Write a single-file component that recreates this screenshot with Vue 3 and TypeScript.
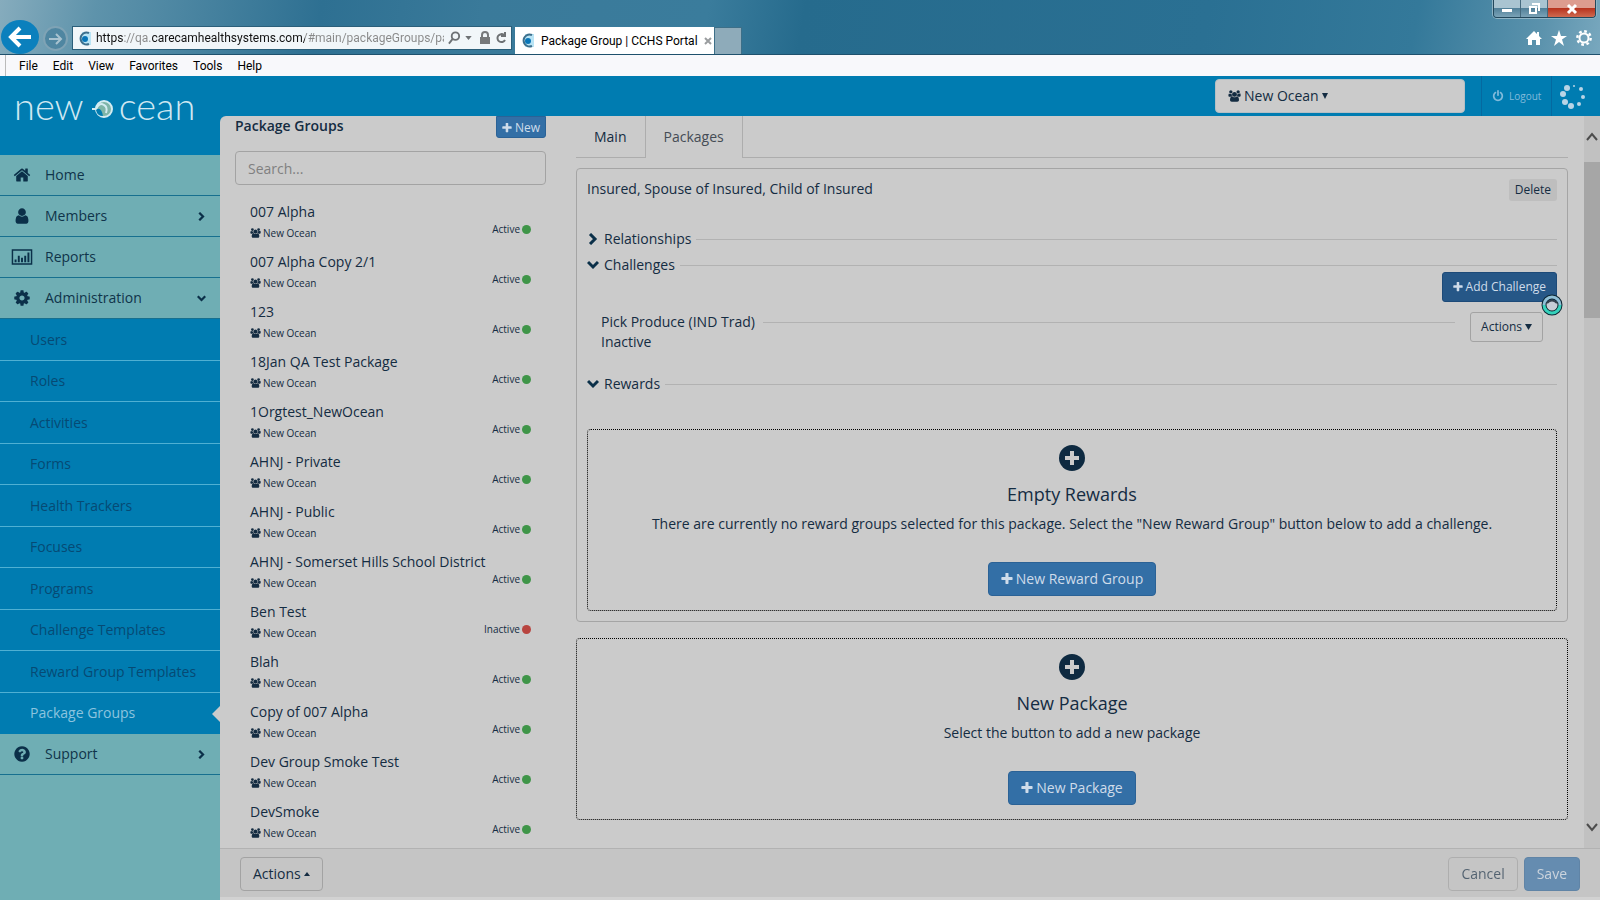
<script setup lang="ts">
import { ref } from 'vue'

interface GroupRow {
  name: string
  active: boolean
}

interface MenuEntry {
  label: string
  icon: string
  arrow?: string
}

const home =
  'M1472 992v480q0 26-19 45t-45 19h-384v-384h-256v384h-384q-26 0-45-19t-19-45v-480q0-1 .5-3t.5-3l575-474 575 474q1 2 1 6zm223-69l-62 74q-8 9-21 11h-3q-13 0-21-7l-692-577-692 577q-12 8-24 7-13-2-21-11l-62-74q-8-10-7-23.5t11-21.5l719-599q32-26 76-26t76 26l244 204v-195q0-14 9-23t23-9h192q14 0 23 9t9 23v408l219 182q10 8 11 21.5t-7 23.5z'
const user =
  'M1536 1399q0 109-62.5 187t-150.5 78h-854q-88 0-150.5-78t-62.5-187q0-85 8.5-160.5t31.5-152 58.5-131 94-89 134.5-34.5q131 128 313 128t313-128q76 0 134.5 34.5t94 89 58.5 131 31.5 152 8.5 160.5zm-256-887q0 159-112.5 271.5t-271.5 112.5-271.5-112.5-112.5-271.5 112.5-271.5 271.5-112.5 271.5 112.5 112.5 271.5z'
const chart =
  'M-128 128H1920V1664H-128ZM16 272V1520H1776V272ZM160 1152H352V1408H160ZM480 768H672V1408H480ZM800 960H992V1408H800ZM1120 768H1312V1408H1120ZM1440 448H1632V1408H1440Z'
const cog =
  'M1152 896q0-106-75-181t-181-75-181 75-75 181 75 181 181 75 181-75 75-181zm512-109v222q0 12-8 23t-20 13l-185 28q-19 54-39 91 35 50 107 138 10 12 10 25t-9 23q-27 37-99 108t-94 71q-12 0-26-9l-138-108q-44 23-91 38-16 136-29 186-7 28-36 28h-222q-14 0-24.5-8.5t-11.5-21.5l-28-184q-49-16-90-37l-141 107q-10 9-25 9-14 0-25-11-126-114-165-168-7-10-7-23 0-12 8-23 15-21 51-66.5t54-70.5q-27-50-41-99l-183-27q-13-2-21-12.5t-8-23.5v-222q0-12 8-23t19-13l186-28q14-46 39-92-40-57-107-138-10-12-10-24 0-10 9-23 26-36 98.5-107.5t94.5-71.5q13 0 26 10l138 107q44-23 91-38 16-136 29-186 7-28 36-28h222q14 0 24.5 8.5t11.5 21.5l28 184q49 16 90 37l142-107q9-9 24-9 13 0 25 10 129 119 165 170 7 8 7 22 0 12-8 23-15 21-51 66.5t-54 70.5q26 50 41 98l183 28q13 2 21 12.5t8 23.5z'
const question =
  'M1024 1376v-192q0-14-9-23t-23-9h-192q-14 0-23 9t-9 23v192q0 14 9 23t23 9h192q14 0 23-9t9-23zm256-672q0-88-55.5-163t-138.5-116-170-41q-243 0-371 213-15 24 8 42l132 100q7 6 19 6 16 0 25-12 53-68 86-92 34-24 86-24 48 0 85.5 26t37.5 59q0 38-20 61t-68 45q-63 28-115.5 86.5t-52.5 125.5v36q0 14 9 23t23 9h192q14 0 23-9t9-23q0-19 21.5-49.5t54.5-49.5q32-18 49-28.5t46-35 44.5-48 28-60.5 12.5-81zm384 192q0 209-103 385.5t-279.5 279.5-385.5 103-385.5-103-279.5-279.5-103-385.5 103-385.5 279.5-279.5 385.5-103 385.5 103 279.5 279.5 103 385.5z'
const users =
  'M657 896q-162 5-265 128h-134q-82 0-138-40.5t-56-118.5q0-353 124-353 6 0 43.5 21t97.5 42.5 119 21.5q67 0 133-23-5 37-5 66 0 159 97 287zm1071 637q0 120-73 189.5t-194 69.5h-874q-121 0-194-69.5t-73-189.5q0-53 3.5-103.5t14-109 26.5-108.5 43-97.5 62-81 85.5-53.5 111.5-20q10 0 43 21.5t73 48 107 48 135 21.5 135-21.5 107-48 73-48 43-21.5q61 0 111.5 20t85.5 53.5 62 81 43 97.5 26.5 108.5 14 109 3.5 103.5zm-1024-1277q0 106-75 181t-181 75-181-75-75-181 75-181 181-75 181 75 75 181zm704 384q0 159-112.5 271.5t-271.5 112.5-271.5-112.5-112.5-271.5 112.5-271.5 271.5-112.5 271.5 112.5 112.5 271.5zm576 225q0 78-56 118.5t-138 40.5h-134q-103-123-265-128 97-128 97-287 0-29-5-66 66 23 133 23 59 0 119-21.5t97.5-42.5 43.5-21q124 0 124 353zm-128-609q0 106-75 181t-181 75-181-75-75-181 75-181 181-75 181 75 75 181z'
const power =
  'M1664 896q0 156-61 298t-164 245-245 164-298 61-298-61-245-164-164-245-61-298q0-182 80.5-343t226.5-270q43-32 95.5-25t83.5 50q32 42 24.5 94.5t-49.5 84.5q-98 74-151.5 181t-53.5 228q0 104 40.5 198.5t109.5 163.5 163.5 109.5 198.5 40.5 198.5-40.5 163.5-109.5 109.5-163.5 40.5-198.5q0-121-53.5-228t-151.5-181q-42-32-49.5-84.5t24.5-94.5q31-43 84-50t95 25q146 109 226.5 270t80.5 343zm-640-768v640q0 52-38 90t-90 38-90-38-38-90v-640q0-52 38-90t90-38 90 38 38 90z'
const plus =
  'M1600 736v192q0 40-28 68t-68 28h-416v416q0 40-28 68t-68 28h-192q-40 0-68-28t-28-68v-416h-416q-40 0-68-28t-28-68v-192q0-40 28-68t68-28h416v-416q0-40 28-68t68-28h192q40 0 68 28t28 68v416h416q40 0 68 28t28 68z'

const right = 'M3 1 8 6 3 11'
const down = 'M1 3 6 8 11 3'

const browserMenu = ['File', 'Edit', 'View', 'Favorites', 'Tools', 'Help']
const address = ref('https://qa.carecamhealthsystems.com/#main/packageGroups/packages')
const search = ref('')

const topMenu: MenuEntry[] = [
  { label: 'Home', icon: home },
  { label: 'Members', icon: user, arrow: right },
  { label: 'Reports', icon: chart },
  { label: 'Administration', icon: cog, arrow: down },
]
const adminMenu = [
  'Users',
  'Roles',
  'Activities',
  'Forms',
  'Health Trackers',
  'Focuses',
  'Programs',
  'Challenge Templates',
  'Reward Group Templates',
  'Package Groups',
]

const groups: GroupRow[] = [
  { name: '007 Alpha', active: true },
  { name: '007 Alpha Copy 2/1', active: true },
  { name: '123', active: true },
  { name: '18Jan QA Test Package', active: true },
  { name: '1Orgtest_NewOcean', active: true },
  { name: 'AHNJ - Private', active: true },
  { name: 'AHNJ - Public', active: true },
  { name: 'AHNJ - Somerset Hills School District', active: true },
  { name: 'Ben Test', active: false },
  { name: 'Blah', active: true },
  { name: 'Copy of 007 Alpha', active: true },
  { name: 'Dev Group Smoke Test', active: true },
  { name: 'DevSmoke', active: true },
]

const spinner = [
  { x: 15, y: 4, r: 1 },
  { x: 22, y: 7, r: 2 },
  { x: 24, y: 15, r: 2 },
  { x: 20, y: 22, r: 2 },
  { x: 12, y: 24, r: 3 },
  { x: 6, y: 20, r: 3 },
  { x: 4, y: 12, r: 3 },
  { x: 8, y: 6, r: 3 },
]
</script>

<template>
  <div class="window">
    <header class="chrome">
      <div class="caption">
        <button class="cap" aria-label="Minimize">
          <svg width="12" height="12" viewBox="0 0 12 12"><rect x="1" y="6" width="10" height="3" fill="#fff" /></svg>
        </button>
        <button class="cap" aria-label="Restore">
          <svg width="12" height="12" viewBox="0 0 12 12" fill="none" stroke="#fff" stroke-width="2">
            <path d="M2 4h6v6H2zM4 1h7v7" />
          </svg>
        </button>
        <button class="cap close" aria-label="Close">
          <svg width="12" height="12" viewBox="0 0 12 12" stroke="#fff" stroke-width="3"><path d="M2 2 10 10M10 2 2 10" /></svg>
        </button>
      </div>
      <div class="nav">
        <button class="back" aria-label="Back">
          <svg width="24" height="24" viewBox="0 0 24 24" fill="none" stroke="#fff" stroke-width="4">
            <path d="M23 12H4M12 3 3 12 12 21" />
          </svg>
        </button>
        <button class="forward" aria-label="Forward">
          <svg width="16" height="16" viewBox="0 0 16 16" fill="none" stroke="#a9c3d0" stroke-width="2">
            <path d="M1 8H13M8 3 13 8 8 13" />
          </svg>
        </button>
        <div class="address">
          <svg width="15" height="15" viewBox="0 0 15 15">
            <rect x="5" y="1" width="9" height="13" fill="#b9e4f5" />
            <path d="M12 2A6 6 0 1 0 12 13" fill="none" stroke="#3d6f8c" stroke-width="2" />
            <circle cx="8" cy="8" r="3" fill="#0a76b8" />
          </svg>
          <input v-model="address" class="url" aria-label="Address" />
          <button class="tool" aria-label="Search">
            <svg width="13" height="14" viewBox="0 0 14 14" fill="none" stroke="#6d7174" stroke-width="2">
              <circle cx="8" cy="5" r="4" /><path d="M5 8 1 13" />
            </svg>
          </button>
          <button class="tool" aria-label="Show address list">
            <svg width="7" height="4" viewBox="0 0 8 5"><path d="M0 0H8L4 5Z" fill="#6d7174" /></svg>
          </button>
          <svg class="lock" width="12" height="14" viewBox="0 0 12 14">
            <path d="M3 7V4a3 3 0 0 1 6 0V7" fill="none" stroke="#77797b" stroke-width="2" />
            <rect x="1" y="6" width="10" height="7" fill="#77797b" />
          </svg>
          <button class="tool" aria-label="Refresh">
            <svg width="12" height="14" viewBox="0 0 12 14" fill="none" stroke="#6d7174" stroke-width="2">
              <path d="M9 4A4 4 0 1 0 10 9" /><path d="M6 5H10V1" />
            </svg>
          </button>
        </div>
        <div class="tab">
          <svg width="15" height="15" viewBox="0 0 15 15">
            <rect x="5" y="1" width="9" height="13" fill="#b9e4f5" />
            <path d="M12 2A6 6 0 1 0 12 13" fill="none" stroke="#3d6f8c" stroke-width="2" />
            <circle cx="8" cy="8" r="3" fill="#0a76b8" />
          </svg>
          <span>Package Group | CCHS Portal</span>
          <button class="tool" aria-label="Close tab">
            <svg width="8" height="8" viewBox="0 0 8 8" stroke="#9a9d9f" stroke-width="2"><path d="M1 1 7 7M7 1 1 7" /></svg>
          </button>
        </div>
        <button class="newtab" aria-label="New tab"></button>
        <div class="quick">
          <button class="tool" aria-label="Home page">
            <svg width="16" height="16" viewBox="0 0 16 16" fill="#fff">
              <path d="M8 1 0 9H2V15H6V10H10V15H14V9H16L13 6V2H11V4Z" />
            </svg>
          </button>
          <button class="tool" aria-label="View favorites">
            <svg width="16" height="16" viewBox="0 0 16 16" fill="#fff">
              <path d="M8 0 10 6H16L11 9.500 13 16 8 12 3 16 5 9.500 0 6H6Z" />
            </svg>
          </button>
          <button class="tool" aria-label="Browser tools">
            <svg width="16" height="16" viewBox="0 0 16 16" fill="none" stroke="#fff">
              <circle cx="8" cy="8" r="4.500" stroke-width="2" />
              <circle cx="8" cy="8" r="6.700" stroke-width="2.400" stroke-dasharray="2.700 2.560" />
            </svg>
          </button>
        </div>
      </div>
      <nav class="menubar" aria-label="Browser menu">
        <button v-for="item in browserMenu" :key="item">{{ item }}</button>
      </nav>
    </header>

    <div class="app">
      <aside class="sidebar">
        <a class="logo" href="#" aria-label="new ocean">
          <span>new</span>
          <svg width="24" height="22" viewBox="0 0 24 22">
            <circle cx="13" cy="11" r="8" fill="#7fb5a8" stroke="#d4ecf2" stroke-width="2" />
            <path d="M1 11H5Q8 4 13 7Q17 9 15 15" fill="none" stroke="#d4ecf2" stroke-width="2" />
            <path d="M5 12Q10 8 12 18Q6 18 5 12Z" fill="#007cb1" />
          </svg>
          <span>cean</span>
        </a>
        <nav aria-label="Main menu">
          <a v-for="m in topMenu" :key="m.label" class="item" href="#">
            <svg class="glyph" width="18" height="18" viewBox="0 0 1792 1792" fill-rule="evenodd"><path :d="m.icon" /></svg>
            <span>{{ m.label }}</span>
            <svg v-if="m.arrow" class="arrow" width="9" height="9" viewBox="0 0 12 12"><path :d="m.arrow" /></svg>
          </a>
          <div class="submenu">
            <a v-for="s in adminMenu" :key="s" href="#" :class="{ current: s === 'Package Groups' }">{{ s }}</a>
          </div>
          <a class="item" href="#">
            <svg class="glyph" width="18" height="18" viewBox="0 0 1792 1792"><path :d="question" /></svg>
            <span>Support</span>
            <svg class="arrow" width="9" height="9" viewBox="0 0 12 12"><path :d="right" /></svg>
          </a>
        </nav>
      </aside>

      <div class="body">
        <div class="topbar">
          <button class="org">
            <svg width="13" height="12" viewBox="0 0 2048 1792"><path :d="users" /></svg>
            <span>New Ocean</span>
            <svg width="6" height="6" viewBox="0 0 6 6"><path d="M0 0H6L3 6Z" /></svg>
          </button>
          <a class="logout" href="#">
            <svg width="12" height="12" viewBox="0 0 1792 1792"><path :d="power" /></svg>
            <span>Logout</span>
          </a>
          <svg class="spinner" width="28" height="28" viewBox="0 0 28 28" fill="#b9d4e6">
            <circle v-for="(d, i) in spinner" :key="i" :cx="d.x" :cy="d.y" :r="d.r" />
          </svg>
        </div>

        <div class="workspace">
          <section class="groups">
            <div class="groups-head">
              <h2>Package Groups</h2>
              <button class="btn primary tiny">
                <svg width="10" height="10" viewBox="150 150 1500 1500"><path :d="plus" /></svg>New
              </button>
            </div>
            <input v-model="search" class="search" type="text" placeholder="Search..." aria-label="Search package groups" />
            <ul>
              <li v-for="g in groups" :key="g.name">
                <div>
                  <a href="#">{{ g.name }}</a>
                  <small><svg width="11" height="10" viewBox="0 0 2048 1792"><path :d="users" /></svg>New Ocean</small>
                </div>
                <span class="status">{{ g.active ? 'Active' : 'Inactive' }}<i :class="{ off: !g.active }"></i></span>
              </li>
            </ul>
          </section>

          <main class="detail">
            <div class="tabs" role="tablist">
              <button role="tab" aria-selected="false">Main</button>
              <button role="tab" aria-selected="true" class="selected">Packages</button>
            </div>

            <section class="card">
              <div class="card-head">
                <span>Insured, Spouse of Insured, Child of Insured</span>
                <button class="delete">Delete</button>
              </div>
              <button class="fold">
                <svg width="12" height="12" viewBox="0 0 12 12"><path :d="right" /></svg><span>Relationships</span>
              </button>
              <button class="fold">
                <svg width="12" height="12" viewBox="0 0 12 12"><path :d="down" /></svg><span>Challenges</span>
              </button>
              <div class="add-row">
                <button class="btn primary small hover">
                  <svg width="10" height="10" viewBox="150 150 1500 1500"><path :d="plus" /></svg>Add Challenge
                </button>
                <svg class="busy" width="22" height="22" viewBox="0 0 22 22" fill="none">
                  <circle cx="11" cy="11" r="8" stroke="#0d2733" stroke-width="5" />
                  <path d="M3 11a8 8 0 0 1 16 0" stroke="#8fbfd6" stroke-width="3" />
                  <path d="M3 11a8 8 0 0 0 16 0" stroke="#36d1bb" stroke-width="3" />
                  <circle cx="11" cy="11" r="5" fill="#c6cdd6" />
                  <path d="M6 9Q11 4 16 9" stroke="#33424e" stroke-width="2" />
                </svg>
              </div>
              <div class="challenge">
                <div class="challenge-text">
                  <p class="ruled">Pick Produce (IND Trad)</p>
                  <p>Inactive</p>
                </div>
                <button class="btn plain small">
                  Actions<svg width="7" height="6" viewBox="0 0 7 6"><path d="M0 0H7L3.500 6Z" /></svg>
                </button>
              </div>
              <button class="fold">
                <svg width="12" height="12" viewBox="0 0 12 12"><path :d="down" /></svg><span>Rewards</span>
              </button>
              <div class="empty inner">
                <svg width="26" height="26" viewBox="0 0 26 26">
                  <circle cx="13" cy="13" r="13" /><path d="M13 6V20M6 13H20" stroke="#cbcbcb" stroke-width="4" />
                </svg>
                <h3>Empty Rewards</h3>
                <p>
                  There are currently no reward groups selected for this package. Select the "New Reward Group" button
                  below to add a challenge.
                </p>
                <button class="btn primary">
                  <svg width="12" height="12" viewBox="150 150 1500 1500"><path :d="plus" /></svg>New Reward Group
                </button>
              </div>
            </section>

            <section class="empty">
              <svg width="26" height="26" viewBox="0 0 26 26">
                <circle cx="13" cy="13" r="13" /><path d="M13 6V20M6 13H20" stroke="#cbcbcb" stroke-width="4" />
              </svg>
              <h3>New Package</h3>
              <p>Select the button to add a new package</p>
              <button class="btn primary">
                <svg width="12" height="12" viewBox="150 150 1500 1500"><path :d="plus" /></svg>New Package
              </button>
            </section>
          </main>

          <div class="scroll" aria-hidden="true">
            <svg width="12" height="10" viewBox="0 0 12 10"><path d="M1 8 6 2 11 8" /></svg>
            <div class="track"><div class="thumb"></div></div>
            <svg width="12" height="10" viewBox="0 0 12 10"><path d="M1 2 6 8 11 2" /></svg>
          </div>
        </div>

        <footer class="actions">
          <button class="btn plain up">
            Actions<svg width="6" height="4" viewBox="0 0 6 4"><path d="M0 4H6L3 0Z" /></svg>
          </button>
          <button class="btn plain faded">Cancel</button>
          <button class="btn primary faded">Save</button>
        </footer>
      </div>
    </div>
  </div>
</template>

<style>
body {
  margin: 0;
  overflow: hidden;
}
</style>

<style scoped>
.window {
  display: flex;
  flex-direction: column;
  height: 100vh;
  font-family: 'Open Sans', 'Noto Sans', sans-serif;
  font-size: 14px;
  line-height: 20px;
  color: #142c42;
  background: #007cb1;
}
.window *,
.window *::before,
.window *::after {
  box-sizing: border-box;
}
button,
input {
  font: inherit;
  color: inherit;
}
button {
  padding: 0;
  border: 0;
  background: none;
  white-space: nowrap;
}
a {
  color: inherit;
  text-decoration: none;
}
h2,
h3,
p,
ul {
  margin: 0;
  padding: 0;
}
svg {
  flex: none;
}

/* browser frame */
.chrome {
  flex: none;
  position: relative;
  background: linear-gradient(100deg, #86acbd 0, #5e93ab 6%, #2e7092 20%, #3a7a9a 30%, #3a7c9c 44%, #266b8d 50%, #2a7093 75%, #34799a 88%, #5c93ad 96%, #7aa9bf 100%);
  font-family: Roboto, 'Open Sans', sans-serif;
  font-size: 12px;
  color: #000;
}
.caption {
  position: absolute;
  top: 0;
  right: 4px;
  display: flex;
  border: 1px solid #23485c;
  border-top: 0;
  border-radius: 0 0 4px 4px;
  overflow: hidden;
  box-shadow: 0 0 0 1px #8fb4c5;
}
.cap {
  display: flex;
  align-items: center;
  justify-content: center;
  width: 27px;
  height: 17px;
  border-right: 1px solid #456a7e;
  background: linear-gradient(#a9c4d1 45%, #52819a 50%, #7ba3b7);
}
.cap.close {
  width: 47px;
  border: 0;
  background: linear-gradient(#dd9c8f 45%, #b8341f 50%, #cf6a50);
}
.nav {
  display: flex;
  align-items: flex-end;
  height: 54px;
  padding: 0 8px 0 1px;
}
.back {
  display: flex;
  align-items: center;
  justify-content: center;
  width: 38px;
  height: 34px;
  border-radius: 50%;
  background: #0b80bd;
}
.forward {
  display: flex;
  align-items: center;
  justify-content: center;
  width: 25px;
  height: 25px;
  margin: 0 4px 3px;
  border: 2px solid #7fa3b5;
  border-radius: 50%;
  background: #4f86a1;
}
.address {
  display: flex;
  align-items: center;
  width: 440px;
  height: 24px;
  margin-bottom: 4px;
  padding: 0 4px;
  border: 1px solid #2b5f7a;
  background: #f1f6f9;
}
.url {
  flex: 1;
  min-width: 0;
  height: 20px;
  margin: 0 0 0 4px;
  padding: 0;
  border: 0;
  outline: 0;
  color: transparent;
  background: linear-gradient(90deg, #111 27px, #888 27px 56px, #111 56px 209px, #888 209px);
  background-clip: text;
  -webkit-background-clip: text;
}
.tool {
  display: flex;
}
.address .tool {
  margin-left: 4px;
}
.lock {
  margin-left: 7px;
}
.tab {
  display: flex;
  align-items: center;
  gap: 6px;
  width: 199px;
  height: 27px;
  margin-left: 3px;
  padding: 0 6px 0 5px;
  background: #fff;
  white-space: nowrap;
}
.tab .tool {
  margin-left: auto;
}
.newtab {
  width: 28px;
  height: 27px;
  border: 1px solid #3d6f88;
  border-bottom: 0;
  background: #8eabba;
}
.quick {
  display: flex;
  gap: 9px;
  margin-left: auto;
  padding-bottom: 8px;
}
.menubar {
  display: flex;
  align-items: center;
  gap: 15px;
  height: 22px;
  padding-left: 19px;
  border-top: 1px solid #1f516d;
  background: linear-gradient(90deg, #f8f8fb 5px, #bbb 5px 6px, #f8f8fb 6px);
}

/* application */
.app {
  flex: 1;
  display: flex;
  min-height: 0;
}
.sidebar {
  display: flex;
  flex-direction: column;
  width: 220px;
  flex: none;
  color: #10344a;
}
.logo {
  display: flex;
  align-items: center;
  height: 79px;
  padding: 0 0 22px 14px;
  font-family: Lato, sans-serif;
  font-weight: 300;
  font-size: 38px;
  line-height: 60px;
  color: #cfe8f2;
}
.logo svg {
  margin: 8px 4px 0 7px;
}
.sidebar nav {
  flex: 1;
  background: #6faeb4;
}
.item {
  display: flex;
  align-items: center;
  height: 41px;
  padding: 0 14px 0 13px;
  border-bottom: 1px solid #17708f;
}
.glyph {
  margin-right: 14px;
  overflow: visible;
  fill: #0b3049;
}
.arrow {
  margin-left: auto;
}
.arrow path,
.fold path {
  fill: none;
  stroke: #0b3049;
  stroke-width: 3px;
}
.submenu {
  display: grid;
  grid-auto-rows: 1fr;
  height: 415px;
  background: #007cb1;
  color: #064a74;
}
.submenu a {
  display: flex;
  align-items: center;
  padding: 1px 0 0 30px;
  border-bottom: 1px solid #4fb0d3;
}
.submenu .current {
  position: relative;
  border-color: #007cb1;
  color: #8cc4df;
}
.current::after {
  content: '';
  position: absolute;
  right: 0;
  top: 13px;
  border: 8px solid transparent;
  border-left: 0;
  border-right-color: #cbcbcb;
}
.body {
  flex: 1;
  display: flex;
  flex-direction: column;
  min-width: 0;
}
.topbar {
  display: flex;
  justify-content: flex-end;
  align-items: center;
  height: 40px;
  padding-right: 13px;
}
.org {
  display: flex;
  align-items: center;
  gap: 3px;
  width: 250px;
  height: 34px;
  margin-right: 16px;
  padding: 0 12px;
  border: 1px solid #b5bfc4;
  border-radius: 4px;
  background: #cbcbcb;
}
.org svg,
.btn svg,
small svg {
  fill: currentColor;
}
.logout {
  display: flex;
  align-items: center;
  gap: 5px;
  width: 71px;
  height: 40px;
  padding-left: 10px;
  border: 0 solid #0569a0;
  border-width: 0 1px;
  font-size: 10px;
  color: #82bbdb;
}
.logout svg {
  fill: currentColor;
}
.spinner {
  margin-left: 7px;
}
.workspace {
  flex: 1;
  display: flex;
  min-height: 0;
  border-top-left-radius: 6px;
  background: #cbcbcb;
  overflow: hidden;
}
.groups {
  flex: none;
  width: 326px;
  padding-left: 15px;
}
.groups-head {
  display: flex;
  justify-content: space-between;
  height: 35px;
}
h2 {
  font-size: 14px;
  font-weight: 600;
  line-height: 20px;
}
.btn {
  display: inline-flex;
  align-items: center;
  justify-content: center;
  gap: 3px;
  height: 34px;
  padding: 0 12px;
  border: 1px solid transparent;
  border-radius: 4px;
}
.btn.primary {
  border-color: #2b6296;
  background: #336fa6;
  color: #cfdcea;
}
.btn.plain {
  border-color: #a3a3a3;
}
.btn.small {
  height: 30px;
  padding: 0 10px;
  border-radius: 3px;
  font-size: 12px;
}
.btn.tiny {
  height: 22px;
  padding: 1px 5px 0;
  border-radius: 0 0 3px 3px;
  font-size: 12px;
}
.btn.hover {
  border-color: #1d4a78;
  background: #265787;
}
.btn.faded {
  opacity: 0.65;
}
.search {
  display: block;
  width: 100%;
  height: 34px;
  padding: 0 12px;
  border: 1px solid #a3a3a3;
  border-radius: 4px;
  background: none;
}
.search::placeholder {
  color: #808080;
}
.groups ul {
  margin-top: 12px;
  padding: 0 15px;
  list-style: none;
}
.groups li {
  display: flex;
  justify-content: space-between;
  height: 50px;
  padding-top: 5px;
}
.groups li a {
  display: block;
}
small,
.status {
  display: flex;
  align-items: center;
  gap: 2px;
  font-size: 10px;
  line-height: 22px;
}
.status {
  padding-top: 16px;
  align-self: flex-start;
}
.status i {
  width: 9px;
  height: 9px;
  border-radius: 50%;
  background: #3f9548;
}
.status i.off {
  background: #b8443f;
}
.detail {
  flex: 1;
  min-width: 0;
  padding: 0 16px 0 30px;
}
.tabs {
  display: flex;
  height: 42px;
  border-bottom: 1px solid #adadad;
}
.tabs button {
  padding: 0 18px;
  height: 42px;
}
.tabs .selected {
  border: 0 solid #adadad;
  border-width: 0 1px;
  background: #cbcbcb;
  color: #454c55;
}
.card {
  margin-top: 10px;
  padding: 10px;
  border: 1px solid #a5a5a5;
  border-radius: 4px;
}
.card-head {
  display: flex;
  justify-content: space-between;
  height: 47px;
}
.delete {
  height: 22px;
  padding: 0 6px;
  border-radius: 3px;
  background: #bebebe;
  font-size: 12px;
}
.fold {
  display: flex;
  align-items: center;
  gap: 5px;
  width: 100%;
  height: 26px;
}
.fold::after,
.ruled::after {
  content: '';
  flex: 1;
  border-top: 1px solid #b2b2b2;
}
.ruled::after {
  margin-left: 8px;
}
.add-row {
  position: relative;
  display: flex;
  align-items: flex-end;
  justify-content: flex-end;
  height: 24px;
}
.busy {
  position: absolute;
  right: -6px;
  bottom: -14px;
}
.challenge {
  display: flex;
  align-items: flex-start;
  gap: 15px;
  height: 59px;
  margin: 10px 14px 0;
}
.challenge-text {
  flex: 1;
}
.ruled {
  display: flex;
  align-items: center;
}
.empty {
  display: flex;
  flex-direction: column;
  align-items: center;
  height: 182px;
  margin-top: 16px;
  padding-top: 15px;
  border: 1px dotted #000;
  border-radius: 4px;
  text-align: center;
}
.empty.inner {
  margin-top: 32px;
}
.empty > svg {
  fill: #0e2a41;
}
h3 {
  margin-top: 11px;
  font-size: 18px;
  font-weight: 400;
  line-height: 24px;
}
.empty p {
  margin: 8px 0 28px;
}
.scroll {
  display: flex;
  flex-direction: column;
  align-items: center;
  width: 16px;
  padding: 16px 0;
  background: #c1c1c1;
}
.scroll svg path {
  fill: none;
  stroke: #4c4c4c;
  stroke-width: 2px;
}
.track {
  flex: 1;
  width: 100%;
  padding-top: 20px;
}
.thumb {
  height: 156px;
  background: #a6a6a6;
}
.actions {
  display: flex;
  align-items: center;
  gap: 6px;
  height: 52px;
  padding: 2px 20px 0;
  border-top: 1px solid #b2b2b2;
  border-bottom: 3px solid #d2d2d2;
  background: #c5c5c5;
}
.actions .up {
  margin-right: auto;
}
</style>
